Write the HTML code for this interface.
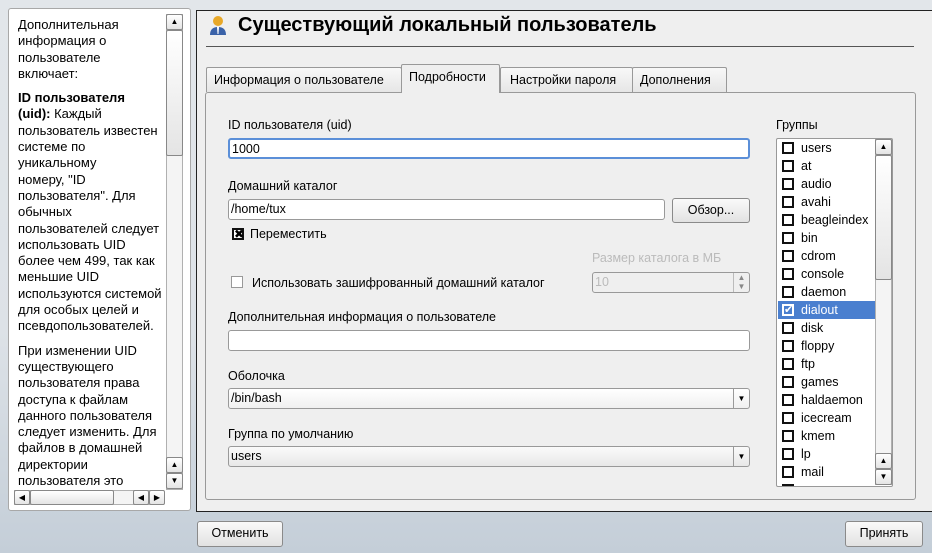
<!DOCTYPE html>
<html><head><meta charset="utf-8"><style>
*{box-sizing:border-box}
body{margin:0;width:932px;height:553px;overflow:hidden;font-family:"Liberation Sans","DejaVu Sans",sans-serif;font-size:12px;color:#000;background:linear-gradient(#e2e6ea 0%,#dde2e7 60%,#c4ced8 100%);position:relative}
.a{position:absolute}
.left{left:8px;top:8px;width:183px;height:503px;background:#fff;border:1px solid #a8a8a8;border-radius:3px}
.lt{left:18px;top:17px;width:148px;height:472px;overflow:hidden;font-size:13px;line-height:16.3px;white-space:nowrap}
.lt p{margin:0 0 8px 0}
.sb{background:#f4f4f4;border:1px solid #b0b0b0}
.btnsm{background:linear-gradient(#fff,#e4e4e4);border:1px solid #888;border-radius:2px;font-size:8px;text-align:center;line-height:13px}
.main{left:196px;top:10px;width:736px;height:502px;background:#efefef;border:1px solid #222;border-right:none}
.title{left:238px;top:14px;font-size:20px;font-weight:bold}
.tab{top:67px;height:25px;border:1px solid #999;border-bottom:none;background:linear-gradient(#f8f8f8,#e6e6e6);font-size:12.5px;line-height:24px;padding-left:7px;border-radius:2px 2px 0 0}
.panel{left:205px;top:92px;width:711px;height:408px;border:1px solid #999;border-radius:3px;background:#efefef}
.lbl{font-size:12.5px}
.inp{background:#fff;border:1px solid #999;border-radius:3px;height:21px;font-size:12.5px;line-height:19px;padding-left:2px}
.btn{background:linear-gradient(#fafafa,#e2e2e2);border:1px solid #8a8a8a;border-radius:3px;text-align:center;font-size:12.5px;line-height:23px}
.cb{width:12px;height:12px;border:2px solid #111;background:#fff}
.list{left:776px;top:138px;width:117px;height:349px;background:#fff;border:1px solid #999;border-radius:2px;overflow:hidden}
.row{position:absolute;left:1px;width:97px;height:18px;font-size:12.5px;line-height:18px;padding-left:23px}
.row .cb{position:absolute;left:4px;top:3px}
.combo{background:linear-gradient(#fff,#f0f0f0);}
.arr{position:absolute;right:0;top:0;width:16px;height:19px;border-left:1px solid #999;font-size:8px;text-align:center;line-height:19px}
</style></head><body>
<div class="a left"></div>
<div class="a lt">
<p>Дополнительная<br>информация о<br>пользователе<br>включает:</p>
<p><b>ID пользователя<br>(uid):</b> Каждый<br>пользователь известен<br>системе по<br>уникальному<br>номеру, "ID<br>пользователя". Для<br>обычных<br>пользователей следует<br>использовать UID<br>более чем 499, так как<br>меньшие UID<br>используются системой<br>для особых целей и<br>псевдопользователей.</p>
<p>При изменении UID<br>существующего<br>пользователя права<br>доступа к файлам<br>данного пользователя<br>следует изменить. Для<br>файлов в домашней<br>директории<br>пользователя это</p>
</div>
<div class="a sb" style="left:166px;top:14px;width:17px;height:476px"></div>
<div class="a btnsm" style="left:166px;top:14px;width:17px;height:16px">▲</div>
<div class="a btnsm" style="left:166px;top:30px;width:17px;height:126px"></div>
<div class="a btnsm" style="left:166px;top:457px;width:17px;height:16px">▲</div>
<div class="a btnsm" style="left:166px;top:473px;width:17px;height:16px">▼</div>
<div class="a sb" style="left:14px;top:490px;width:150px;height:15px"></div>
<div class="a btnsm" style="left:14px;top:490px;width:16px;height:15px">◀</div>
<div class="a btnsm" style="left:30px;top:490px;width:84px;height:15px"></div>
<div class="a btnsm" style="left:133px;top:490px;width:16px;height:15px">◀</div>
<div class="a btnsm" style="left:149px;top:490px;width:16px;height:15px">▶</div>

<div class="a main"></div>
<svg class="a" style="left:208px;top:15px" width="20" height="22" viewBox="0 0 20 22"><circle cx="10" cy="6" r="5" fill="#e8a828"/><path d="M2 20 Q2 12 10 12 Q18 12 18 20 Z" fill="#3a62a8"/><path d="M9 12 L11 12 L10.5 19 L9.5 19Z" fill="#fff"/></svg>
<div class="a title">Существующий локальный пользователь</div>
<div class="a" style="left:206px;top:46px;width:708px;height:1px;background:#555"></div>
<div class="a tab" style="left:206px;width:196px">Информация о пользователе</div>
<div class="a tab" style="left:401px;top:64px;height:29px;width:99px;background:#efefef;z-index:2">Подробности</div>
<div class="a tab" style="left:500px;width:133px;padding-left:9px">Настройки пароля</div>
<div class="a tab" style="left:632px;width:95px">Дополнения</div>
<div class="a panel"></div>

<div class="a lbl" style="left:228px;top:118px">ID пользователя (uid)</div>
<div class="a inp" style="left:228px;top:138px;width:522px;border:2px solid #5b8fd8">1000</div>
<div class="a lbl" style="left:228px;top:179px">Домашний каталог</div>
<div class="a inp" style="left:228px;top:199px;width:437px">/home/tux</div>
<div class="a btn" style="left:672px;top:198px;width:78px;height:25px">Обзор...</div>
<div class="a cb" style="left:232px;top:228px;font-size:12px;line-height:8px;text-align:center;font-weight:bold">✖</div>
<div class="a lbl" style="left:250px;top:227px">Переместить</div>
<div class="a lbl" style="left:592px;top:251px;color:#bbb">Размер каталога в МБ</div>
<div class="a cb" style="left:231px;top:276px;border:1px solid #999"></div>
<div class="a lbl" style="left:252px;top:276px">Использовать зашифрованный домашний каталог</div>
<div class="a inp" style="left:592px;top:272px;width:158px;background:#efefef;color:#bbb">10<div class="arr" style="border-left:1px solid #bbb;line-height:9px;color:#888">▲<br>▼</div></div>
<div class="a lbl" style="left:228px;top:310px">Дополнительная информация о пользователе</div>
<div class="a inp" style="left:228px;top:330px;width:522px">&nbsp;</div>
<div class="a lbl" style="left:228px;top:369px">Оболочка</div>
<div class="a inp combo" style="left:228px;top:388px;width:522px">/bin/bash<div class="arr">▼</div></div>
<div class="a lbl" style="left:228px;top:427px">Группа по умолчанию</div>
<div class="a inp combo" style="left:228px;top:446px;width:522px;background:linear-gradient(#fafafa,#e8e8e8)">users<div class="arr">▼</div></div>

<div class="a lbl" style="left:776px;top:118px">Группы</div>
<div class="a list">
<div class="row" style="top:0"><span class="cb"></span>users</div>
<div class="row" style="top:18px"><span class="cb"></span>at</div>
<div class="row" style="top:36px"><span class="cb"></span>audio</div>
<div class="row" style="top:54px"><span class="cb"></span>avahi</div>
<div class="row" style="top:72px"><span class="cb"></span>beagleindex</div>
<div class="row" style="top:90px"><span class="cb"></span>bin</div>
<div class="row" style="top:108px"><span class="cb"></span>cdrom</div>
<div class="row" style="top:126px"><span class="cb"></span>console</div>
<div class="row" style="top:144px"><span class="cb"></span>daemon</div>
<div class="row" style="top:162px;background:#4a7fcf;color:#fff"><span class="cb" style="border-color:#fff;background:#4a7fcf;color:#fff;font-size:11px;line-height:8px;text-align:center">✔</span>dialout</div>
<div class="row" style="top:180px"><span class="cb"></span>disk</div>
<div class="row" style="top:198px"><span class="cb"></span>floppy</div>
<div class="row" style="top:216px"><span class="cb"></span>ftp</div>
<div class="row" style="top:234px"><span class="cb"></span>games</div>
<div class="row" style="top:252px"><span class="cb"></span>haldaemon</div>
<div class="row" style="top:270px"><span class="cb"></span>icecream</div>
<div class="row" style="top:288px"><span class="cb"></span>kmem</div>
<div class="row" style="top:306px"><span class="cb"></span>lp</div>
<div class="row" style="top:324px"><span class="cb"></span>mail</div>
<div class="row" style="top:342px"><span class="cb"></span>man</div>
</div>
<div class="a sb" style="left:875px;top:139px;width:17px;height:346px"></div>
<div class="a btnsm" style="left:875px;top:139px;width:17px;height:16px">▲</div>
<div class="a btnsm" style="left:875px;top:155px;width:17px;height:125px"></div>
<div class="a btnsm" style="left:875px;top:453px;width:17px;height:16px">▲</div>
<div class="a btnsm" style="left:875px;top:469px;width:17px;height:16px">▼</div>

<div class="a btn" style="left:197px;top:521px;width:86px;height:26px">Отменить</div>
<div class="a btn" style="left:845px;top:521px;width:78px;height:26px">Принять</div>
</body></html>
